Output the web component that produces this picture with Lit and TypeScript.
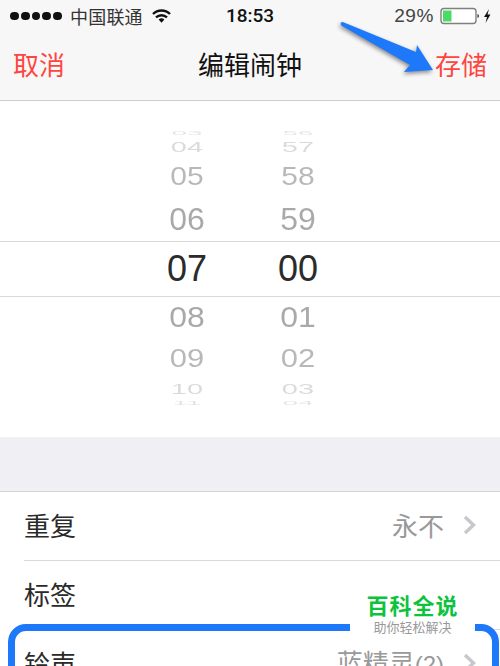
import { LitElement, html, css, svg } from "lit";
import { customElement } from "lit/decorators.js";

type Row = [string, string, number, number, number, number];
// hour, minute, row height, font size, vertical scale, opacity
const ROWS: Row[] = [
  ["03", "56", 6, 28, 0.18, 0.12],
  ["04", "57", 22, 29, 0.52, 0.17],
  ["05", "58", 38, 30, 0.83, 0.33],
  ["06", "59", 45, 32, 1, 0.4],
  ["07", "00", 55, 36, 1, 1],
  ["08", "01", 42, 32, 0.95, 0.4],
  ["09", "02", 40, 31, 0.85, 0.33],
  ["10", "03", 22, 29, 0.52, 0.17],
  ["11", "04", 6, 28, 0.18, 0.12],
];

@customElement("app-root")
export class AppRoot extends LitElement {
  static styles = css`
    :host {
      display: block;
      width: 500px;
      height: 666px;
      overflow: hidden;
      position: relative;
      background: #fff;
      font-family: "Noto Sans CJK SC", "Liberation Sans", sans-serif;
    }
    .head { background: #f7f7f7; height: 100px; border-bottom: 1px solid #cfcfcf; }
    .status { display: grid; grid-template-columns: 1fr auto 1fr; align-items: center; height: 32px; color: #1c1c1c; }
    .left { display: flex; align-items: center; padding-left: 10px; }
    .dots { display: flex; gap: 2px; margin-right: 8px; }
    .dots i { width: 8.8px; height: 8.8px; border-radius: 50%; background: #111; display: block; }
    .carrier { font-size: 18px; line-height: 32px; color: #333; letter-spacing: 0.2px; }
    .wifi { margin-left: 9px; display: block; }
    .time { font: 500 19px/32px Roboto, sans-serif; color: #111; }
    .right { display: flex; align-items: center; justify-content: flex-end; padding-right: 9px; }
    .pct { font: 400 19px/32px "Liberation Sans", sans-serif; color: #444; margin-right: 6px; letter-spacing: .6px; }
    .nav { display: grid; grid-template-columns: 1fr auto 1fr; align-items: center; height: 68px; box-sizing: border-box; padding: 0 13px 4px; font-size: 26px; line-height: 34px; }
    .nav .act { color: #ff4540; }
    .nav .act:last-child { text-align: right; }
    .nav .title { color: #111; font-weight: 400; }

    .picker { background: #fff; height: 336px; position: relative; }
    .band { position: absolute; left: 0; right: 0; top: 140px; height: 54px; border-top: 1px solid #d9d9d9; border-bottom: 1px solid #d9d9d9; }
    .wheel { padding: 29px 15px 0 0; display: flex; flex-direction: column; }
    .r { display: grid; grid-template-columns: 111px 111px; grid-auto-rows: 100%; justify-content: center; overflow: hidden; color: #2b2b2b; font-family: "Liberation Sans", sans-serif; }
    .r span { display: flex; align-items: center; justify-content: center; line-height: 1; }

    .gap { background: #efeff4; height: 54px; border-bottom: 1px solid #d3d3d6; }
    .list { background: #fff; }
    .row { display: flex; align-items: center; height: 68px; margin-left: 24px; padding-right: 24px; border-bottom: 1px solid #d9d9dc; font-size: 26px; line-height: 34px; color: #2a2a2a; }
    .row b { font-weight: 400; position: relative; top: -1px; }
    .val { margin-left: auto; color: #999; display: flex; align-items: center; gap: 19px; font-size: 26px; position: relative; top: -1px; }
    .num { font: 400 24px/34px "Liberation Sans", sans-serif; }
    .row svg { display: block; }

    .arrow { position: absolute; left: 330px; top: 12px; filter: drop-shadow(-1px 2px 2px rgba(0,0,0,.45)); }
    .mark { position: absolute; left: 8px; top: 624px; width: 491px; height: 120px; box-sizing: border-box; border: 7px solid #1e78fa; border-radius: 18px; }
    .wm { position: absolute; left: 350px; top: 590px; width: 125px; height: 50px; background: #fff; text-align: center; }
    .wm .a { color: #0cc43c; font-size: 22px; line-height: 28px; font-weight: 700; letter-spacing: 1px; }
    .wm .b { color: #999; font-size: 13px; line-height: 16px; margin-top: 1px; }
  `;

  render() {
    return html`
      <div class="head">
        <div class="status">
          <div class="left">
            <div class="dots"><i></i><i></i><i></i><i></i><i></i></div>
            <span class="carrier">中国联通</span>
            <svg class="wifi" width="19" height="14" viewBox="0 0 19 14">
              <path d="M1 5 A12 12 0 0 1 18 5" fill="none" stroke="#111" stroke-width="2.4"/>
              <path d="M4 8.4 A8 8 0 0 1 15 8.4" fill="none" stroke="#111" stroke-width="2.4"/>
              <path d="M9.5 13.8 L6.6 10.6 A4.4 4.4 0 0 1 12.4 10.6 Z" fill="#111"/>
            </svg>
          </div>
          <div class="time">18:53</div>
          <div class="right">
            <span class="pct">29%</span>
            <svg width="51" height="18" viewBox="0 0 51 18">
              <rect x="1" y="1.5" width="35" height="15" rx="3" fill="#fff" stroke="#808080" stroke-width="1.4"/>
              <rect x="3" y="3.5" width="8.5" height="11" fill="#4cd964"/>
              <path d="M37.5 7 Q39 7.4 39 9 Q39 10.6 37.5 11 Z" fill="#333"/>
              <path d="M49 2 L44 10 L47 10 L45.5 16 L50.5 7.5 L47.5 7.5 Z" fill="#111"/>
            </svg>
          </div>
        </div>
        <div class="nav">
          <span class="act">取消</span>
          <span class="title">编辑闹钟</span>
          <span class="act">存储</span>
        </div>
      </div>

      <div class="picker">
        <div class="band"></div>
        <div class="wheel">
          ${ROWS.map(([h, m, rh, fs, sy, op]) => html`
            <div class="r" style="height:${rh}px;opacity:${op}">
              <span style="font-size:${fs}px;transform:scaleY(${sy})">${h}</span>
              <span style="font-size:${fs}px;transform:scaleY(${sy})">${m}</span>
            </div>`)}
        </div>
      </div>

      <div class="gap"></div>
      <div class="list">
        <div class="row"><b>重复</b><span class="val">永不${this.chev()}</span></div>
        <div class="row"><b>标签</b></div>
        <div class="row"><b>铃声</b><span class="val"><span>蓝精灵<span class="num">(2)</span></span>${this.chev()}</span></div>
      </div>

      <svg class="arrow" width="115" height="70" viewBox="0 0 115 70">
        <path d="M11 10.5 Q12 9.5 14 10.5 L86 40 L87 33 L103 58 L74 60 L80 53 L12 14 Q10 12.5 11 10.5 Z" fill="#1e78fa"/>
      </svg>
      <div class="mark"></div>
      <div class="wm">
        <div class="a">百科全说</div>
        <div class="b">助你轻松解决</div>
      </div>
    `;
  }

  chev() {
    return svg`<svg width="13" height="20" viewBox="0 0 13 20"><path d="M2 2 L10.5 10 L2 18" fill="none" stroke="#c7c7cc" stroke-width="3.4"/></svg>`;
  }
}
